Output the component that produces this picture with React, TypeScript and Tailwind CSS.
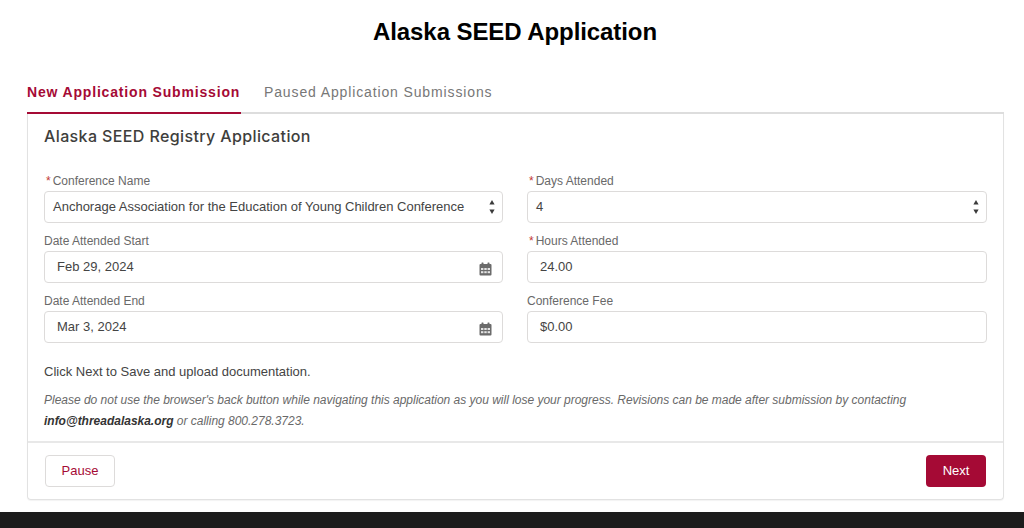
const sans = "font-['Liberation_Sans',Arial,sans-serif]";

function Arrows() {
  return (
    <svg width="6" height="16" viewBox="0 0 6 16" className="shrink-0">
      <path d="M3 1 L5.6 5.6 L0.4 5.6 Z" fill="#3a3a3a" />
      <path d="M0.4 10.4 L5.6 10.4 L3 15 Z" fill="#3a3a3a" />
    </svg>
  );
}

function Calendar() {
  return (
    <svg width="13" height="14" viewBox="0 0 13 14" className="shrink-0 mt-[4px] mr-[-1px]">
      <rect x="2.5" y="0.5" width="2" height="3" rx="0.5" fill="#6b6b6b" />
      <rect x="8.5" y="0.5" width="2" height="3" rx="0.5" fill="#6b6b6b" />
      <path d="M1.5 2 H11.5 A1 1 0 0 1 12.5 3 V12.5 A1 1 0 0 1 11.5 13.5 H1.5 A1 1 0 0 1 0.5 12.5 V3 A1 1 0 0 1 1.5 2 Z" fill="#6b6b6b" />
      <g fill="#e4e4e4">
        <rect x="2" y="6" width="2.4" height="2" />
        <rect x="5.3" y="6" width="2.4" height="2" />
        <rect x="8.6" y="6" width="2.4" height="2" />
        <rect x="2" y="9.2" width="2.4" height="2" />
        <rect x="5.3" y="9.2" width="2.4" height="2" />
        <rect x="8.6" y="9.2" width="2.4" height="2" />
      </g>
    </svg>
  );
}

function Field({
  label,
  value,
  required,
  kind,
}: {
  label: string;
  value: string;
  required?: boolean;
  kind?: "select" | "date";
}) {
  const select = kind === "select";
  return (
    <div className="flex flex-col">
      <div className="h-[20px] flex items-center text-[12px] leading-[18px] text-[#696969]">
        {required && <span className="text-[#c23934] ml-[2px] mr-[2px]">*</span>}
        {label}
      </div>
      <div
        className={`h-[32px] flex items-center justify-between border border-[#dddbda] rounded-[4px] bg-white text-[#444444] whitespace-nowrap ${
          select ? "pl-[8px] pr-[7px]" : "pl-[12px] pr-[11px]"
        }`}
      >
        <span className="text-[13px]">{value}</span>
        {kind === "select" && <Arrows />}
        {kind === "date" && <Calendar />}
      </div>
    </div>
  );
}

export default function App() {
  return (
    <div className={`${sans} w-[1024px] h-[528px] overflow-hidden bg-white flex flex-col`}>
      <h1 className="h-[71px] pt-[17px] pl-[6px] text-center text-[24px] leading-[30px] font-bold tracking-[-0.08px] text-black">
        Alaska SEED Application
      </h1>
      <div className="ml-[27px] mr-[20px] flex-1 flex flex-col">
        <div className="flex h-[43px] border-b-2 border-[#dddddd] text-[14px] tracking-[0.87px] whitespace-nowrap">
          <div className="w-[214px] h-[43px] border-b-2 border-[#a50a35] pt-[12px] leading-[18px] font-bold tracking-[0.83px] text-[#a50a35]">
            New Application Submission
          </div>
          <div className="ml-[23px] pt-[12px] leading-[18px] text-[#777777]">
            Paused Application Submissions
          </div>
        </div>
        <div className="h-[386px] border border-t-0 border-[#e2e2e2] rounded-b-[4px] flex flex-col shadow-[0_1px_1px_rgba(0,0,0,0.05)]">
          <h2 className="pl-[16px] pt-[11px] h-[57px] font-['Inter',sans-serif] text-[16px] leading-[22px] font-medium tracking-[0.38px] text-[#3e3e3c]">
            Alaska SEED Registry Application
          </h2>
          <div className="pl-[16px] pr-[16px] grid grid-cols-[459px_460px] gap-x-[24px] gap-y-[8px]">
            <Field required label="Conference Name" kind="select" value="Anchorage Association for the Education of Young Children Conference" />
            <Field required label="Days Attended" kind="select" value="4" />
            <Field label="Date Attended Start" kind="date" value="Feb 29, 2024" />
            <Field required label="Hours Attended" value="24.00" />
            <Field label="Date Attended End" kind="date" value="Mar 3, 2024" />
            <Field label="Conference Fee" value="$0.00" />
          </div>
          <p className="pl-[16px] mt-[19px] text-[13px] leading-[20px] text-[#444444]">
            Click Next to Save and upload documentation.
          </p>
          <p className="pl-[16px] pr-[80px] mt-[8px] text-[12px] leading-[21px] italic tracking-[-0.012px] text-[#696969]">
            Please do not use the browser's back button while navigating this application as you will lose your progress. Revisions can be made after submission by contacting{" "}
            <b className="text-[#333333]">info@threadalaska.org</b> or calling 800.278.3723.
          </p>
          <div className="mt-[9px] flex-1 border-t-2 border-[#e8e8e8] pl-[17px] pr-[17px] pt-[12px] flex justify-between items-start">
            <div className="w-[70px] h-[32px] border border-[#dddbda] rounded-[4px] flex items-center justify-center text-[13px] text-[#a50a35]">
              Pause
            </div>
            <div className="w-[60px] h-[32px] rounded-[4px] bg-[#a50a35] flex items-center justify-center text-[13px] text-white">
              Next
            </div>
          </div>
        </div>
      </div>
      <div className="h-[16px] bg-[#1c1c1c] mt-auto" />
    </div>
  );
}
